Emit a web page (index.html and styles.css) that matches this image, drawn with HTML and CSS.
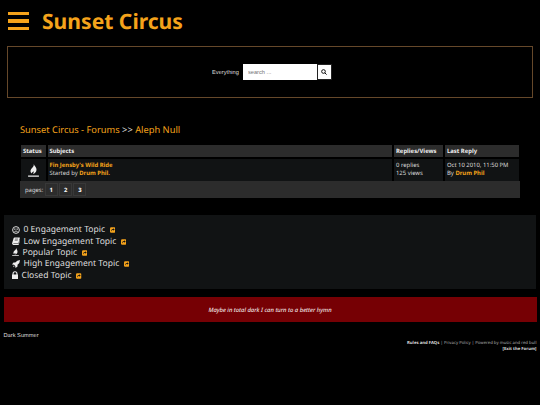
FILE: index.html
```
<!DOCTYPE html>
<html lang="en">
<head>
    <meta charset="utf-8">
    <title>Sunset Circus</title>
    <link rel="stylesheet" href="styles.css">
</head>
<body>
    <svg class="symbols">
        <symbol id="link" viewBox="0 0 14 14">
            <path fill="#f5a31b" d="M3 0h8a3 3 0 0 1 3 3v8a3 3 0 0 1-3 3H3a3 3 0 0 1-3-3V3a3 3 0 0 1 3-3z"/>
            <path fill="#111314" d="M8 2.500l4 3.300-4 3.300V7.200C5.500 7.200 4.500 8 4 10.500 2 7 4 4.500 8 4.500z"/>
        </symbol>
        <symbol id="fire" viewBox="0 0 20 24">
            <path d="M12 0c1 5 5 7 4 12-.6 4-3 6-6.500 8 1-3 .5-4-1-5-2 1-2.500 3-2 5C3 17 3 13 5.500 10 8 7 12 5 12 0zM0 21.500h20V24H0z"/>
        </symbol>
        <symbol id="flame" viewBox="0 0 20 24">
            <path d="M10.500 0c1 4 5.500 6 5 11-.4 4-3 6-6.500 7.500 1-2 2-3.500 1-5-1 1.500-3 2-3.500 4C3.500 15 4 11 6.500 8.500 9 6 11 4 10.500 0zM0 21h20v2.600H0z"/>
        </symbol>
    </svg>

    <header class="header">
        <div class="burger"><span></span><span></span><span></span></div>
        <h1 class="brand">Sunset Circus</h1>
    </header>

    <form class="search-box">
        <span class="search-label">Everything</span>
        <input class="search-input" type="text" placeholder="search ...">
        <button class="search-button" type="button">
            <svg viewBox="0 0 12 12"><circle cx="5" cy="5" r="3.700"/><path d="M7.800 7.800l3.400 3.400"/></svg>
        </button>
    </form>

    <main class="forum">
        <div class="navigate"><a href="#">Sunset Circus - Forums</a> &gt;&gt; <a href="#">Aleph Null</a></div>
        <div class="table">
            <div class="table-row table-head">
                <div class="status">Status</div>
                <div>Subjects</div>
                <div>Replies/Views</div>
                <div>Last Reply</div>
            </div>
            <div class="table-row table-body">
                <div class="status"><svg class="status-icon"><use href="#flame"/></svg></div>
                <div><a href="#">Fin Jensby's Wild Ride</a><br>Started by <a href="#">Drum Phil.</a></div>
                <div>0 replies<br>125 views</div>
                <div>Oct 10 2010, 11:50 PM<br>By <a href="#">Drum Phil</a></div>
            </div>
            <div class="pagination">pages: <a href="#">1</a><a href="#">2</a><a href="#">3</a></div>
        </div>
    </main>

    <section class="note">
        <div class="note-row">
            <svg class="icon" viewBox="0 0 16 16"><circle cx="8" cy="8" r="6.800" fill="none" stroke="#eee" stroke-width="1.800"/><path d="M4.500 5h2.300v2.400H4.500zM9.200 5h2.300v2.400H9.200z"/><path d="M4.500 12Q8 7.500 11.500 12" fill="none" stroke="#eee" stroke-width="1.600"/></svg>
            <span>0 Engagement Topic</span><svg class="link"><use href="#link"/></svg>
        </div>
        <div class="note-row">
            <svg class="icon" viewBox="0 0 16 16"><path d="M5 1h10q1 0 .7 1L13 12q-.3 1-1.300 1H3q-1 .8 0 1.200h10L15.500 6 16 7l-2.500 8q-.3 1-1.500 1H2.500Q-.5 15 .3 12L3.200 2.500Q3.700 1 5 1z"/><path d="M6 4h6M5.400 6.500h6" stroke="#111314" stroke-width="1"/></svg>
            <span>Low Engagement Topic</span><svg class="link"><use href="#link"/></svg>
        </div>
        <div class="note-row">
            <svg class="icon icon-fire"><use href="#fire"/></svg>
            <span>Popular Topic</span><svg class="link"><use href="#link"/></svg>
        </div>
        <div class="note-row">
            <svg class="icon" viewBox="0 0 16 16"><path d="M16 0q0 6-5 9.500V13l-4 3-.5-4L4 9.500 0 9l3-4h3.500Q10 0 16 0zM3.500 11l1.700 1.700L2 14.500z"/></svg>
            <span>High Engagement Topic</span><svg class="link"><use href="#link"/></svg>
        </div>
        <div class="note-row">
            <svg class="icon icon-lock" viewBox="0 0 12 16"><path d="M1 7V5.500a5 5 0 0 1 10 0V7h1v9H0V7zM3.200 7h5.600V5.500a2.800 2.800 0 0 0-5.600 0z"/></svg>
            <span>Closed Topic</span><svg class="link"><use href="#link"/></svg>
        </div>
    </section>

    <div class="quote">Maybe in total dark I can turn to a better hymn</div>

    <footer class="footer">
        <span class="theme">Dark Summer</span>
        <div class="footer-links">
            <b>Rules and FAQs</b> | Privacy Policy | Powered by music and red bull<br>
            <b>[Exit the Forum]</b>
        </div>
    </footer>
</body>
</html>
```
FILE: styles.css
```
* {
    box-sizing: border-box;
}
body {
    margin: 0;
    height: 405px;
    overflow: hidden;
    background: #000;
    color: #ddd;
    font-family: "Noto Sans", sans-serif;
    font-size: 5.900px;
    text-rendering: geometricPrecision;
    white-space: nowrap;
}
a {
    color: #f5a31b;
    text-decoration: none;
}
svg {
    fill: #eee;
    flex: none;
}
.symbols {
    display: block;
    width: 0;
    height: 0;
}
.header {
    display: flex;
    align-items: center;
    height: 42px;
    padding-left: 8px;
    gap: 13px;
}
.burger {
    display: flex;
    flex-direction: column;
    gap: 4px;
    width: 21px;
}
.burger span {
    height: 3.300px;
    background: #f5a31b;
}
.brand {
    margin: 0;
    padding-top: 1px;
    color: #f5a31b;
    font-size: 21.100px;
    font-weight: bold;
    line-height: 42px;
}
.search-box {
    display: flex;
    align-items: center;
    justify-content: center;
    height: 52px;
    margin: 4px 7px 0;
    padding-left: 4px;
    border: 1px solid #66482a;
    font-family: "Liberation Sans", sans-serif;
}
.search-label {
    margin-right: 4px;
    padding-top: 1px;
    font-size: 5.700px;
}
.search-input {
    width: 74px;
    height: 16px;
    padding: 0 5px;
    border: 0;
    background: #fff;
    font: 5.700px "Liberation Sans", sans-serif;
}
.search-button {
    display: flex;
    align-items: center;
    justify-content: center;
    width: 15px;
    height: 16px;
    padding: 0;
    border: 1px solid #222;
    background: #fff;
}
.search-button svg {
    width: 6px;
    height: 6px;
    fill: none;
    stroke: #111;
    stroke-width: 2;
}
.forum {
    padding: 25px 20px 0;
}
.navigate {
    font-size: 9.300px;
    line-height: 14px;
}
.table {
    margin-top: 8px;
}
.table-row {
    display: grid;
    grid-template-columns: 25px 1fr 49px 74px;
    gap: 2px;
    padding: 0 1px;
}
.table-head {
    height: 12px;
    margin-bottom: 2px;
    color: #eee;
    font-weight: bold;
    line-height: 12px;
}
.table-head div {
    padding-left: 2px;
    background: #2c2c2c;
}
.table-body {
    height: 22px;
    line-height: 8px;
}
.table-body div {
    padding: 2px 2px 0;
    background: #111314;
}
.table-row div:nth-child(2) {
    padding-left: 1.500px;
}
.table-body a {
    font-weight: bold;
}
.table-body .status {
    display: flex;
    align-items: center;
    justify-content: center;
    padding: 0;
}
.status-icon {
    width: 11px;
    height: 13px;
}
.pagination {
    display: flex;
    align-items: center;
    height: 17px;
    padding-left: 5px;
    background: #2c2c2c;
}
.pagination a {
    width: 13px;
    height: 13px;
    margin-left: 1.400px;
    border: 1px solid #383838;
    color: #fff;
    font-weight: bold;
    line-height: 12px;
    text-align: center;
}
.note {
    height: 74px;
    margin: 17px 4px 0 3.500px;
    padding: 9px 8px;
    background: #111314;
    font-size: 8.550px;
}
.note-row {
    display: flex;
    align-items: center;
    height: 11.400px;
    line-height: 11px;
}
.icon {
    width: 8px;
    height: 8px;
    margin-right: 4px;
}
.icon-fire {
    width: 7px;
}
.icon-lock {
    width: 6px;
}
.link {
    width: 5.500px;
    height: 6px;
    margin: 1px 0 0 4.500px;
}
.quote {
    height: 25px;
    margin: 8px 3.500px 0;
    background: #760004;
    color: #fff;
    font-style: italic;
    line-height: 26px;
    text-align: center;
}
.footer {
    display: flex;
    justify-content: space-between;
    padding: 10px 3.500px 0;
}
.theme {
    font: 5.700px/8px "Liberation Sans", sans-serif;
}
.footer-links {
    padding-top: 7.500px;
    color: #aaa;
    font-size: 4.250px;
    line-height: 6px;
    text-align: right;
}
.footer-links b {
    color: #ddd;
}
```
